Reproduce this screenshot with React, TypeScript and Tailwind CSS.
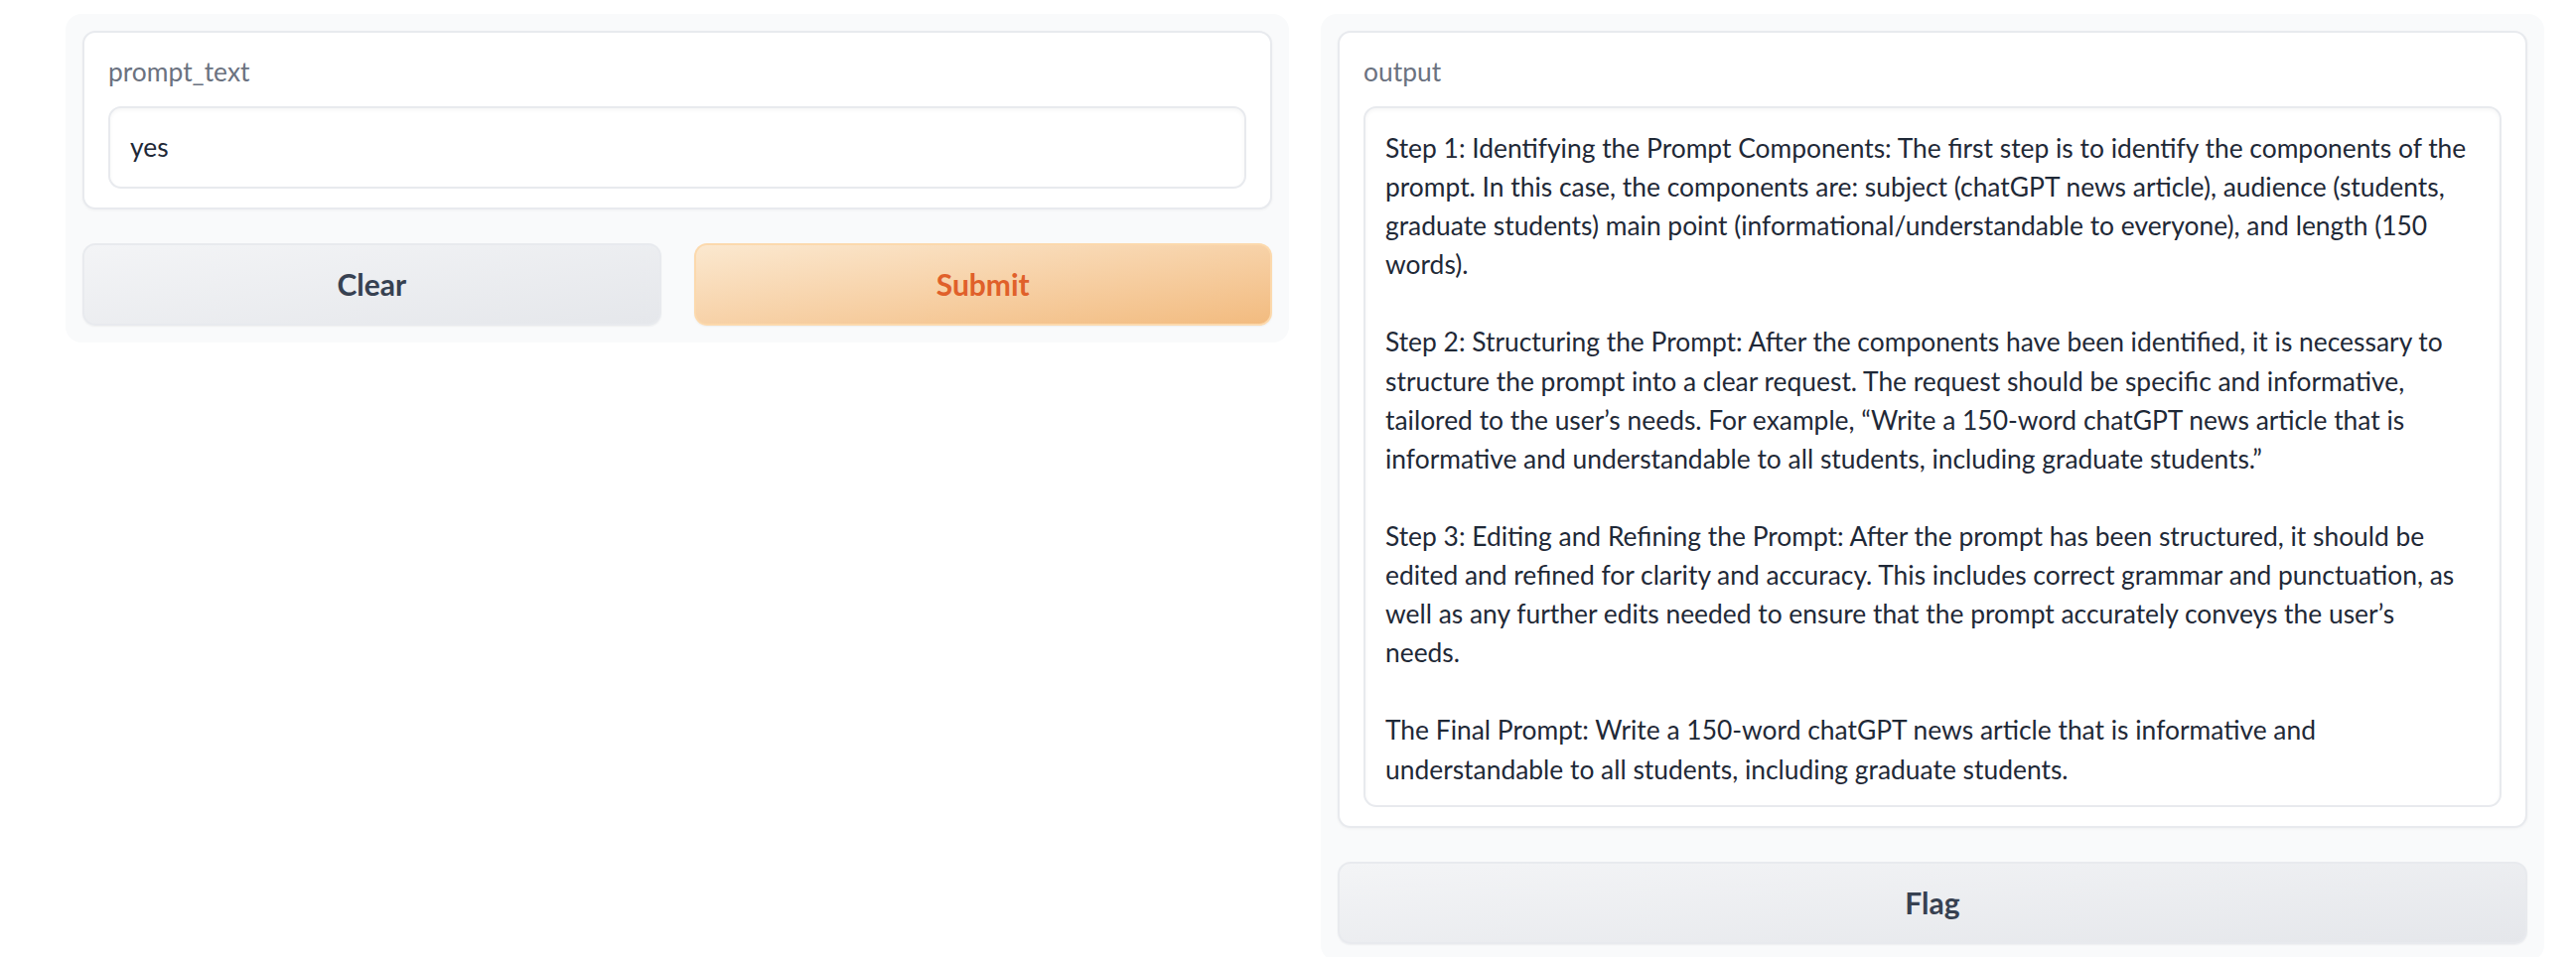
import React from 'react';

const outputLines = [
  'Step 1: Identifying the Prompt Components: The first step is to identify the components of the',
  'prompt. In this case, the components are: subject (chatGPT news article), audience (students,',
  'graduate students) main point (informational/understandable to everyone), and length (150',
  'words).',
  '',
  'Step 2: Structuring the Prompt: After the components have been identified, it is necessary to',
  'structure the prompt into a clear request. The request should be specific and informative,',
  'tailored to the user\u2019s needs. For example, \u201cWrite a 150-word chatGPT news article that is',
  'informative and understandable to all students, including graduate students.\u201d',
  '',
  'Step 3: Editing and Refining the Prompt: After the prompt has been structured, it should be',
  'edited and refined for clarity and accuracy. This includes correct grammar and punctuation, as',
  'well as any further edits needed to ensure that the prompt accurately conveys the user\u2019s',
  'needs.',
  '',
  'The Final Prompt: Write a 150-word chatGPT news article that is informative and',
  'understandable to all students, including graduate students.',
];

const Card: React.FC<{ label: string; children: React.ReactNode }> = ({ label, children }) => (
  <div className="rounded-[13px] border-2 border-[#e8eaee] bg-white px-[24px] pt-[20px] pb-[19px] shadow-[0_1px_3px_rgba(0,0,0,0.04)]">
    <div className="mb-[16px] text-[26.4px] leading-[38px] text-[#6b7280]">{label}</div>
    {children}
  </div>
);

const GrayButton: React.FC<{ children: React.ReactNode }> = ({ children }) => (
  <button className="h-[83px] w-full rounded-[13px] border-2 border-[#e8eaee] bg-gradient-to-br from-[#f3f4f6] to-[#e5e7eb] text-[30px] font-bold text-[#374151] shadow-[0_1px_2px_rgba(0,0,0,0.05)]">
    {children}
  </button>
);

export default function App() {
  return (
    <div className="flex min-h-screen items-start gap-[32px] bg-white pt-[14px] pl-[66px] pr-[32px] font-[family-name:Lato,sans-serif]">
      {/* inputs */}
      <div className="flex w-[1232px] flex-col gap-[34px] rounded-[16px] bg-[#f9fafb] p-[17px]">
        <Card label="prompt_text">
          <div className="rounded-[13px] border-2 border-[#e8eaee] bg-white px-[20px] py-[20px] text-[26.4px] leading-[39px] text-[#1f2937] shadow-[inset_0_2px_4px_rgba(0,0,0,0.04)]">
            yes
          </div>
        </Card>
        <div className="grid grid-cols-2 gap-[33px]">
          <GrayButton>Clear</GrayButton>
          <button className="h-[83px] w-full rounded-[13px] border-2 border-[#fcd9ad] bg-gradient-to-br from-[#fbe8cf] to-[#f2bb7f] text-[30px] font-bold text-[#e0602a] shadow-[0_1px_2px_rgba(0,0,0,0.05)]">
            Submit
          </button>
        </div>
      </div>

      {/* output */}
      <div className="flex w-[1232px] flex-col gap-[34px] rounded-[16px] bg-[#f9fafb] p-[17px]">
        <Card label="output">
          <div className="rounded-[13px] border-2 border-[#e8eaee] bg-white pl-[20px] pr-[10px] pt-[21px] pb-[16px] text-[26.4px] leading-[39.1px] text-[#1f2937] shadow-[inset_0_2px_4px_rgba(0,0,0,0.04)]">
            {outputLines.map((line, i) => (
              <div key={i} className="h-[39.1px] whitespace-nowrap">
                {line}
              </div>
            ))}
          </div>
        </Card>
        <GrayButton>Flag</GrayButton>
      </div>
    </div>
  );
}
